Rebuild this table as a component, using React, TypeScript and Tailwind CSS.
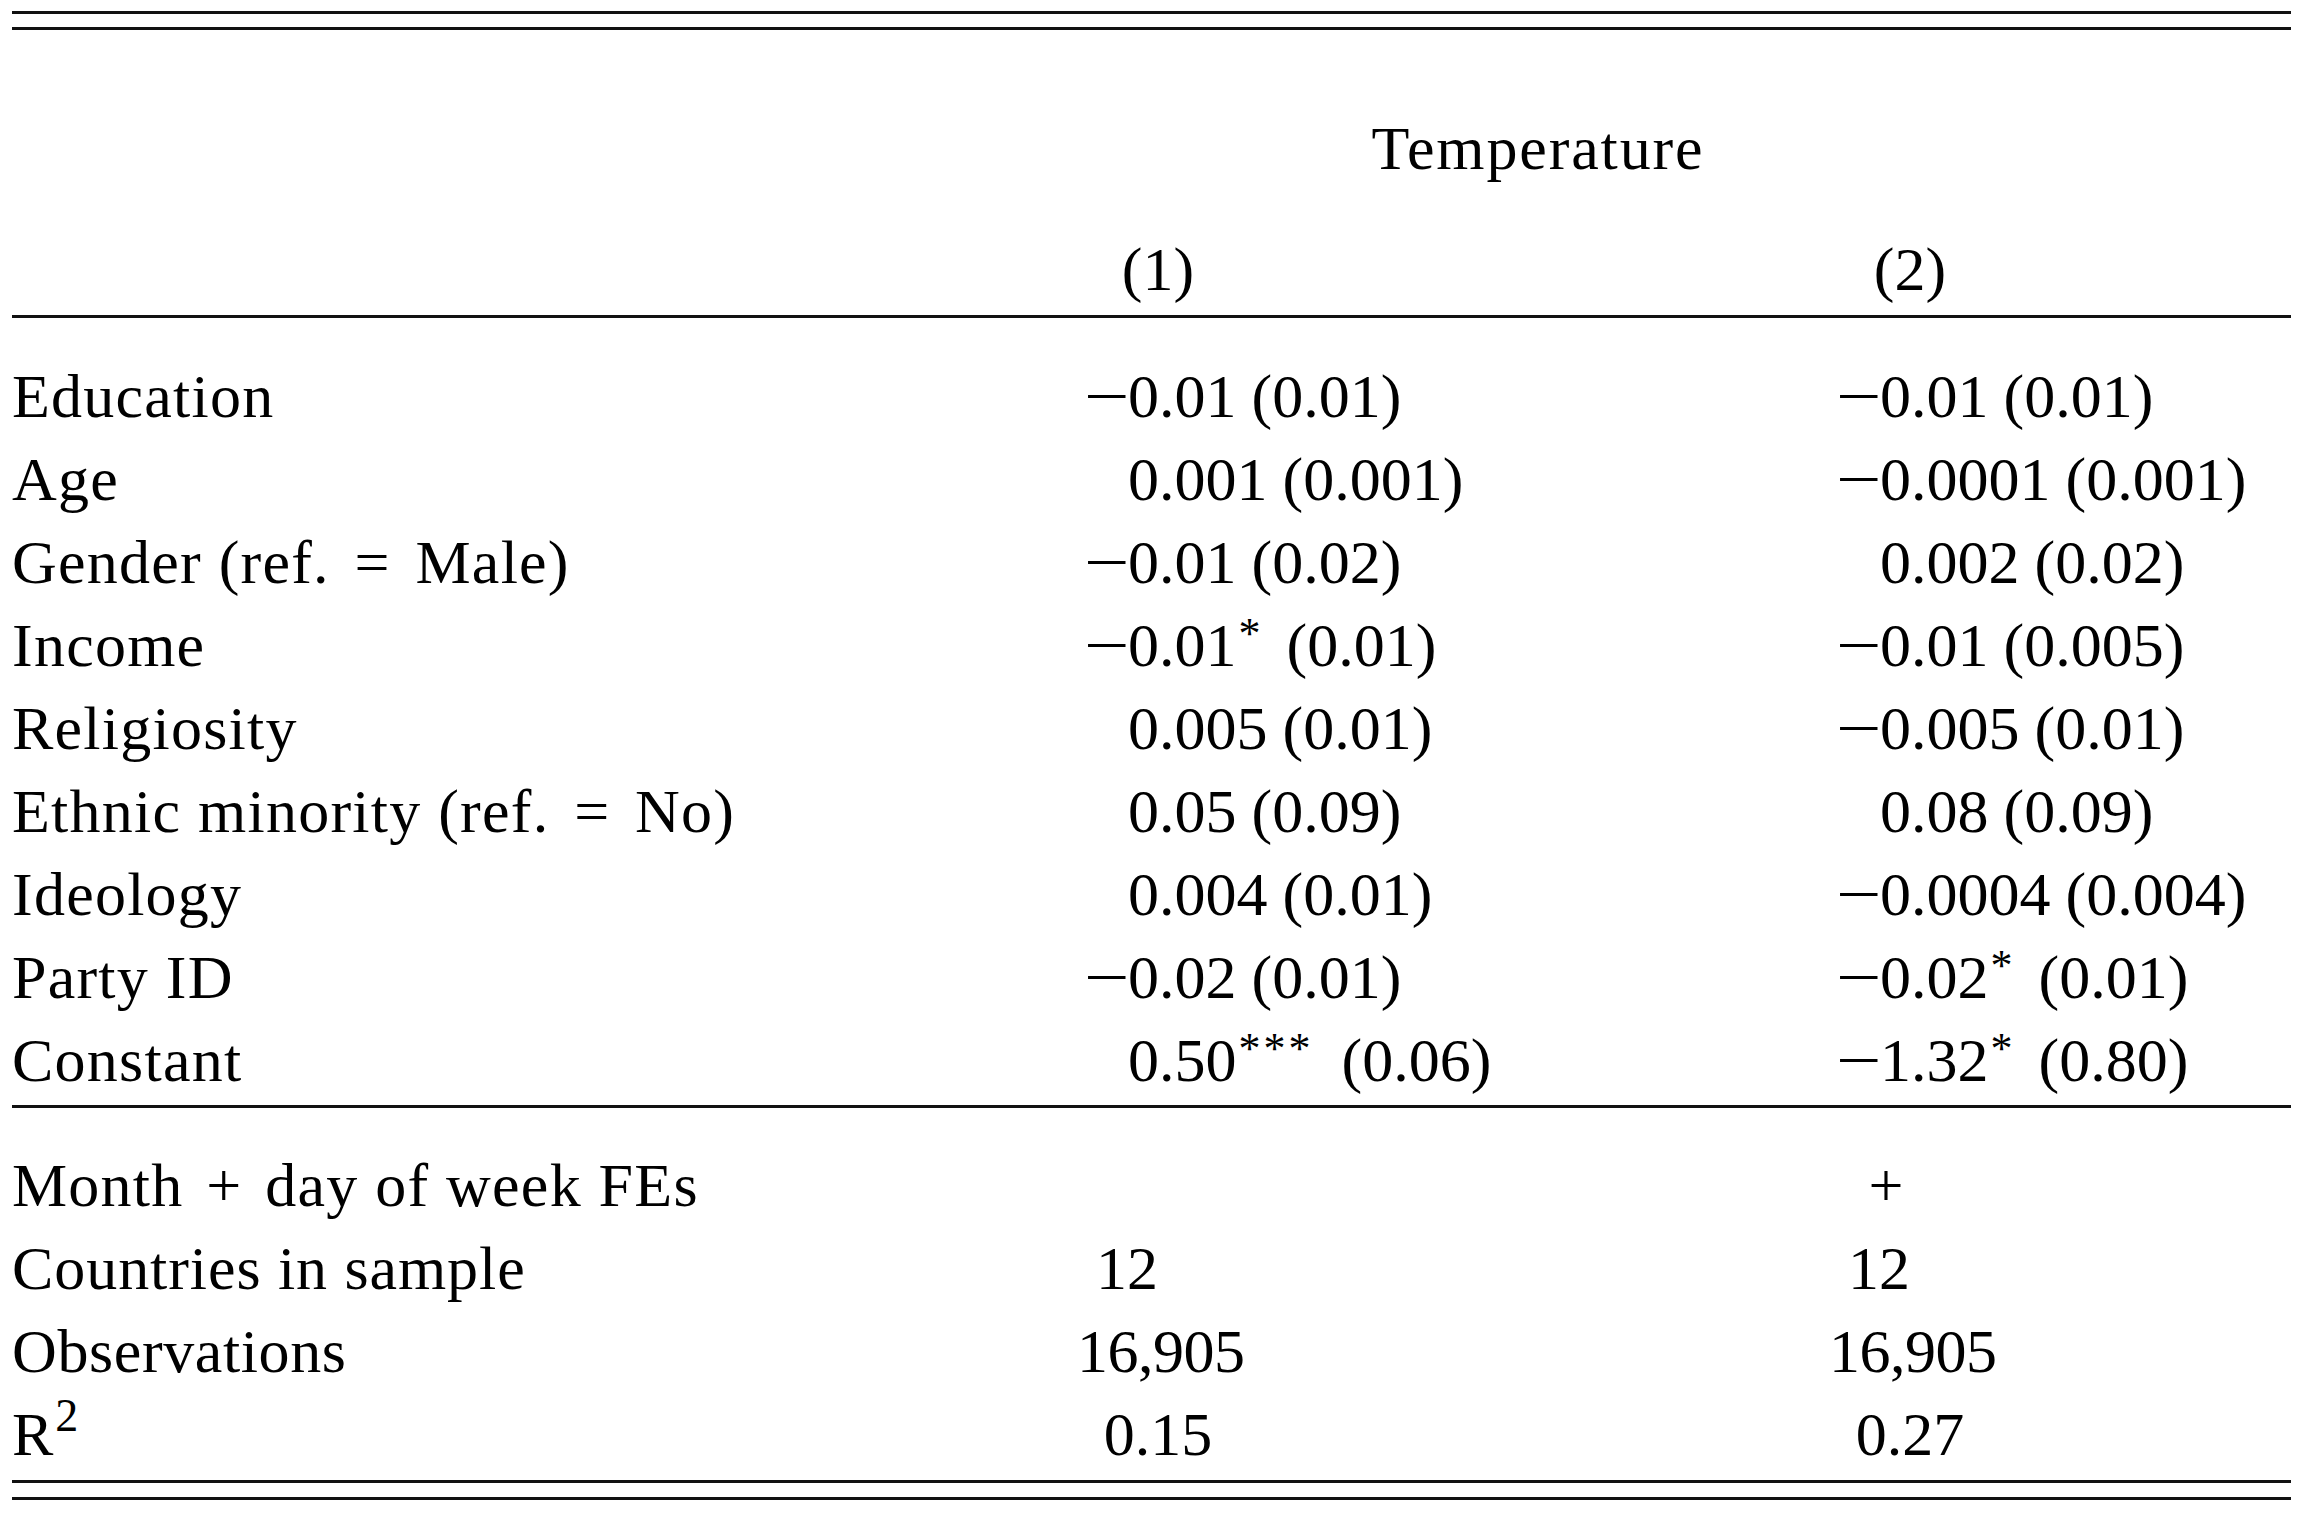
import React from 'react';

type Cell = { neg?: boolean; num: string; stars?: string; se: string };

const rows: { label: React.ReactNode; c1: Cell; c2: Cell }[] = [
  { label: 'Education', c1: { neg: true, num: '0.01', se: '(0.01)' }, c2: { neg: true, num: '0.01', se: '(0.01)' } },
  { label: 'Age', c1: { num: '0.001', se: '(0.001)' }, c2: { neg: true, num: '0.0001', se: '(0.001)' } },
  {
    label: (
      <>
        Gender (ref. <span className="mx-[8px]">=</span> Male)
      </>
    ),
    c1: { neg: true, num: '0.01', se: '(0.02)' },
    c2: { num: '0.002', se: '(0.02)' },
  },
  { label: 'Income', c1: { neg: true, num: '0.01', stars: '*', se: '(0.01)' }, c2: { neg: true, num: '0.01', se: '(0.005)' } },
  { label: 'Religiosity', c1: { num: '0.005', se: '(0.01)' }, c2: { neg: true, num: '0.005', se: '(0.01)' } },
  {
    label: (
      <>
        Ethnic minority (ref. <span className="mx-[8px]">=</span> No)
      </>
    ),
    c1: { num: '0.05', se: '(0.09)' },
    c2: { num: '0.08', se: '(0.09)' },
  },
  { label: 'Ideology', c1: { num: '0.004', se: '(0.01)' }, c2: { neg: true, num: '0.0004', se: '(0.004)' } },
  { label: 'Party ID', c1: { neg: true, num: '0.02', se: '(0.01)' }, c2: { neg: true, num: '0.02', stars: '*', se: '(0.01)' } },
  { label: 'Constant', c1: { num: '0.50', stars: '***', se: '(0.06)' }, c2: { neg: true, num: '1.32', stars: '*', se: '(0.80)' } },
];

function Rule() {
  return <div className="h-[3px] w-full bg-[#111]" />;
}

function Value({ cell }: { cell: Cell }) {
  const gap = !cell.stars ? 'ml-[15px]' : cell.stars.length > 1 ? 'ml-[28px]' : 'ml-[23px]';
  return (
    <div className="whitespace-nowrap">
      <span className="inline-block w-[44px]">
        {cell.neg && <span className="inline-block origin-left scale-x-[1.3]">−</span>}
      </span>
      {cell.num}
      {cell.stars && (
        <span className="relative -top-[18px] ml-[2px] text-[44px] leading-none tracking-[3px]">{cell.stars}</span>
      )}
      <span className={gap}>{cell.se}</span>
    </div>
  );
}

export default function App() {
  return (
    <div
      className="w-[2304px] h-[1518px] bg-white pt-[11px] pl-[12px] text-black text-[62px] leading-[83px]"
      style={{ fontFamily: '"Liberation Serif", "Times New Roman", serif' }}
    >
      <div className="w-[2279px]">
        <Rule />
        <div className="mt-[13px]">
          <Rule />
        </div>

        {/* header */}
        <div className="grid grid-cols-[1072px_752px_1fr] mt-[77px] h-[83px]">
          <div />
          <div className="col-span-2 w-[908px] text-center tracking-[0.03em]">Temperature</div>
        </div>
        <div className="grid grid-cols-[1072px_752px_1fr] mt-[38px] h-[83px]">
          <div />
          <div className="w-[148px] text-center">(1)</div>
          <div className="w-[148px] text-center">(2)</div>
        </div>
        <div className="mt-[4px]">
          <Rule />
        </div>

        {/* coefficients */}
        <div className="pt-[37px] pb-[3px]">
          {rows.map((r, i) => (
            <div key={i} className="grid grid-cols-[1072px_752px_1fr] h-[83px]">
              <div className="tracking-[0.02em] whitespace-nowrap">{r.label}</div>
              <Value cell={r.c1} />
              <Value cell={r.c2} />
            </div>
          ))}
        </div>
        <Rule />

        {/* footer stats */}
        <div className="pt-[36px] pb-[4px]">
          <div className="grid grid-cols-[1072px_752px_1fr] h-[83px]">
            <div className="tracking-[0.02em] whitespace-nowrap">
              Month <span className="mx-[6px]">+</span> day of week FEs
            </div>
            <div />
            <div className="w-[100px] text-center">+</div>
          </div>
          <div className="grid grid-cols-[1072px_752px_1fr] h-[83px]">
            <div className="tracking-[0.015em]">Countries in sample</div>
            <div className="w-[74px] text-right">12</div>
            <div className="w-[74px] text-right">12</div>
          </div>
          <div className="grid grid-cols-[1072px_752px_1fr] h-[83px]">
            <div className="tracking-[0.01em]">Observations</div>
            <div className="-ml-[7px] whitespace-nowrap tracking-[-0.5px]">16,905</div>
            <div className="-ml-[7px] whitespace-nowrap tracking-[-0.5px]">16,905</div>
          </div>
          <div className="grid grid-cols-[1072px_752px_1fr] h-[83px]">
            <div>
              R<span className="relative -top-[24px] ml-[2px] text-[46px] leading-none">2</span>
            </div>
            <div className="w-[148px] text-center">0.15</div>
            <div className="w-[148px] text-center">0.27</div>
          </div>
        </div>
        <Rule />
        <div className="mt-[14px]">
          <Rule />
        </div>
      </div>
    </div>
  );
}
